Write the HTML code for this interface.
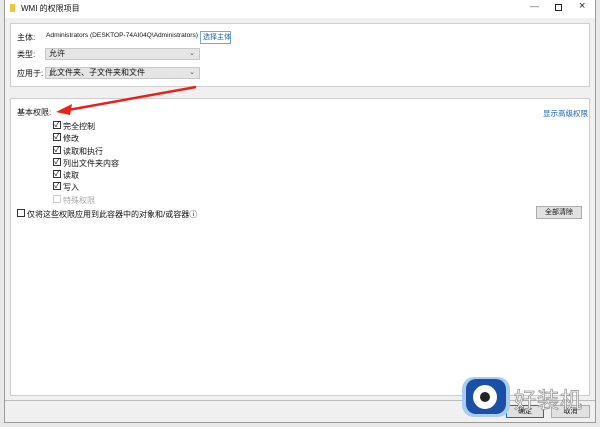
<!DOCTYPE html>
<html><head><meta charset="utf-8"><style>
*{margin:0;padding:0;box-sizing:border-box}
body{width:600px;height:427px;background:#e8e8e8;position:relative;overflow:hidden;font-family:"Liberation Sans","Noto Sans CJK SC",sans-serif;font-size:8px;color:#111;white-space:nowrap}
.a{position:absolute}
.win{left:4px;top:0;width:592px;height:423px;background:#f0f0f0;border:1px solid #9a9a9a;border-top:none}
.panel{background:#fff;border:1px solid #cfcfcf}
.sel{background:#e5e5e5;border:1px solid #c8c8c8;height:12px;font-size:8px;line-height:10px;padding-left:3px}
.chev{position:absolute;right:4px;top:0;font-size:7px;color:#555}
.cb{width:8px;height:8px;border:1px solid #333;background:#fff;font-size:8px;line-height:6px;text-align:center}
.btn{background:#e1e1e1;border:1px solid #adadad;font-size:7px;text-align:center;line-height:11px}
</style></head><body>
<div class="a win"></div>
<div class="a" style="left:5px;top:0;width:590px;height:18px;background:#fff"></div>
<div class="a" style="left:10px;top:4px;width:5px;height:8px;background:#f3c53a"></div>
<div class="a" style="left:21px;top:3px;font-size:8px">WMI 的权限项目</div>
<div class="a" style="left:530px;top:1px;font-size:9px;color:#555">—</div>
<div class="a" style="left:555px;top:4px;width:7px;height:7px;border:1px solid #222"></div>
<div class="a" style="left:579px;top:0px;font-size:11px;color:#222">×</div>

<div class="a panel" style="left:10px;top:23px;width:580px;height:64px"></div>
<div class="a" style="left:17px;top:32px">主体:</div>
<div class="a" style="left:46px;top:32px;font-size:6.6px">Administrators (DESKTOP-74AI04Q\Administrators)</div>
<div class="a" style="left:200px;top:31px;width:31px;height:13px;border:1px solid #7aa7d6;color:#1a5fb4;font-size:7px;line-height:11px;padding-left:2px">选择主体</div>
<div class="a" style="left:17px;top:49px">类型:</div>
<div class="a sel" style="left:45px;top:48px;width:155px">允许<span class="chev">⌄</span></div>
<div class="a" style="left:17px;top:68px">应用于:</div>
<div class="a sel" style="left:45px;top:67px;width:155px">此文件夹、子文件夹和文件<span class="chev">⌄</span></div>

<div class="a panel" style="left:10px;top:98px;width:580px;height:298px"></div>
<div class="a" style="left:17px;top:107px">基本权限:</div>
<div class="a" style="left:543px;top:108px;color:#1a5fb4;font-size:7.5px">显示高级权限</div>
<div class="a" style="left:53px;top:121px;line-height:12.3px">
<div style="display:flex;gap:2px"><div class="cb">✓</div>完全控制</div>
<div style="display:flex;gap:2px"><div class="cb">✓</div>修改</div>
<div style="display:flex;gap:2px"><div class="cb">✓</div>读取和执行</div>
<div style="display:flex;gap:2px"><div class="cb">✓</div>列出文件夹内容</div>
<div style="display:flex;gap:2px"><div class="cb">✓</div>读取</div>
<div style="display:flex;gap:2px"><div class="cb">✓</div>写入</div>
<div style="display:flex;gap:2px;color:#aaa"><div class="cb" style="border-color:#ccc"></div>特殊权限</div>
</div>
<div class="a" style="left:17px;top:209px;display:flex;gap:2px"><div class="cb"></div>仅将这些权限应用到此容器中的对象和/或容器ⓘ</div>
<div class="a btn" style="left:536px;top:206px;width:46px;height:13px">全部清除</div>

<svg class="a" style="left:0;top:0" width="600" height="427">
<path d="M196 87 L68 110" stroke="#e8221b" stroke-width="2.5"/>
<path d="M56 112 L72 104 L70 115 Z" fill="#e8221b"/>
</svg>

<div class="a" style="left:5px;top:400px;width:590px;height:1px;background:#bbb"></div>
<div class="a btn" style="left:506px;top:405px;width:38px;height:13px;border-color:#0078d7">确定</div>
<div class="a btn" style="left:551px;top:405px;width:39px;height:13px">取消</div>

<div class="a" style="left:462px;top:377px;width:48px;height:40px;background:#a9cdf2;border-radius:12px"></div>
<div class="a" style="left:466px;top:379px;width:40px;height:35px;background:#1b4fa6;border-radius:10px"></div>
<div class="a" style="left:473px;top:385px;width:24px;height:24px;background:#fff;border-radius:50%"></div>
<div class="a" style="left:480px;top:392px;width:10px;height:10px;background:#222;border-radius:50%"></div>
<div class="a" style="left:514px;top:383px;font-size:22px;color:#fff;letter-spacing:1px;-webkit-text-stroke:0.8px #999">好装机</div>
</body></html>
